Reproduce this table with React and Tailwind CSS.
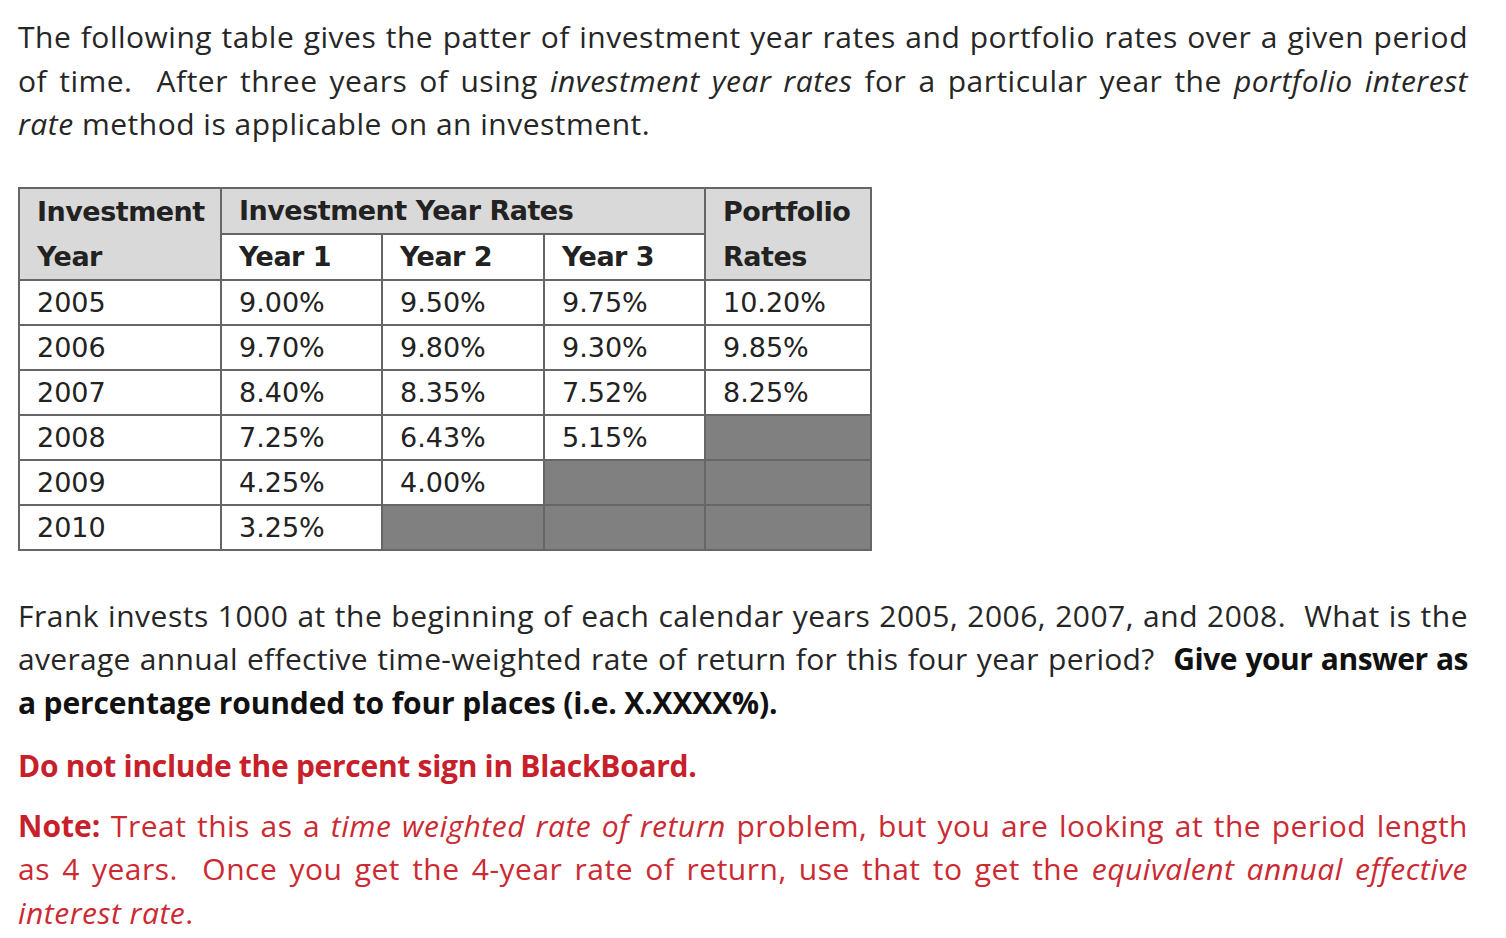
import React from 'react';

const rows = [
  ['2005', '9.00%', '9.50%', '9.75%', '10.20%'],
  ['2006', '9.70%', '9.80%', '9.30%', '9.85%'],
  ['2007', '8.40%', '8.35%', '7.52%', '8.25%'],
  ['2008', '7.25%', '6.43%', '5.15%', null],
  ['2009', '4.25%', '4.00%', null, null],
  ['2010', '3.25%', null, null, null],
];

function Line({ children, last }) {
  return (
    <div className={`whitespace-nowrap ${last ? 'text-left' : 'text-justify [text-align-last:justify]'}`}>
      {children}
    </div>
  );
}

export default function App() {
  const cell = 'border-2 border-[#666666] h-[45px] pl-[17px] align-middle';
  return (
    <div className="min-h-screen bg-white px-[18px] pt-[15px] font-['Open_Sans',sans-serif] text-[30px] leading-[43.5px] tracking-[0.5px] text-[#262626]">
      <div className="w-[1450px]">
        <Line>The following table gives the patter of investment year rates and portfolio rates over a given period</Line>
        <Line>
          of time.&nbsp; After three years of using <i>investment year rates</i> for a particular year the <i>portfolio interest</i>
        </Line>
        <Line last>
          <i>rate</i> method is applicable on an investment.
        </Line>
      </div>

      <table className="mt-[41px] border-collapse border-2 border-[#666666] font-['DejaVu_Sans',sans-serif] text-[27px] leading-[41px] tracking-normal text-[#222222]">
        <colgroup>
          <col className="w-[202px]" />
          <col className="w-[161px]" />
          <col className="w-[162px]" />
          <col className="w-[161px]" />
          <col className="w-[166px]" />
        </colgroup>
        <thead>
          <tr>
            <th rowSpan={2} className={`${cell} bg-[#d9d9d9] text-left align-top font-bold tracking-[-0.5px]`}>
              <div className="leading-[45px]">Investment</div>
              <div className="leading-[45px]">Year</div>
            </th>
            <th colSpan={3} className={`${cell} bg-[#d9d9d9] text-left font-bold tracking-[-0.5px]`}>
              Investment Year Rates
            </th>
            <th rowSpan={2} className={`${cell} bg-[#d9d9d9] text-left align-top font-bold tracking-[-0.5px]`}>
              <div className="leading-[45px]">Portfolio</div>
              <div className="leading-[45px]">Rates</div>
            </th>
          </tr>
          <tr>
            <th className={`${cell} bg-white text-left font-bold tracking-[-0.5px]`}>Year 1</th>
            <th className={`${cell} bg-white text-left font-bold tracking-[-0.5px]`}>Year 2</th>
            <th className={`${cell} bg-white text-left font-bold tracking-[-0.5px]`}>Year 3</th>
          </tr>
        </thead>
        <tbody>
          {rows.map((r) => (
            <tr key={r[0]}>
              {r.map((v, i) =>
                v === null ? (
                  <td key={i} className={`${cell} bg-[#808080]`} />
                ) : (
                  <td key={i} className={`${cell} bg-white`}>{v}</td>
                )
              )}
            </tr>
          ))}
        </tbody>
      </table>

      <div className="mt-[43px] w-[1450px]">
        <Line>Frank invests 1000 at the beginning of each calendar years 2005, 2006, 2007, and 2008.&nbsp; What is the</Line>
        <Line>
          <span className="tracking-[0.3px]">average annual effective time-weighted rate of return for this four year period?</span>&nbsp; <b className="tracking-[-0.5px] text-[#111111]">Give your answer as</b>
        </Line>
        <Line last>
          <b className="tracking-[-0.15px] text-[#111111]">a percentage rounded to four places (i.e. X.XXXX%).</b>
        </Line>
      </div>

      <p className="mt-[20px] font-bold tracking-[-0.3px] text-[#c8202a]">Do not include the percent sign in BlackBoard.</p>

      <div className="mt-[16px] w-[1450px] text-[#cc2a33]">
        <Line>
          <b className="tracking-normal text-[#c8202a]">Note:</b> Treat this as a <i>time weighted rate of return</i> problem, but you are looking at the period length
        </Line>
        <Line>
          as 4 years.&nbsp; Once you get the 4-year rate of return, use that to get the <i>equivalent annual effective</i>
        </Line>
        <Line last>
          <i>interest rate</i>.
        </Line>
      </div>
    </div>
  );
}
